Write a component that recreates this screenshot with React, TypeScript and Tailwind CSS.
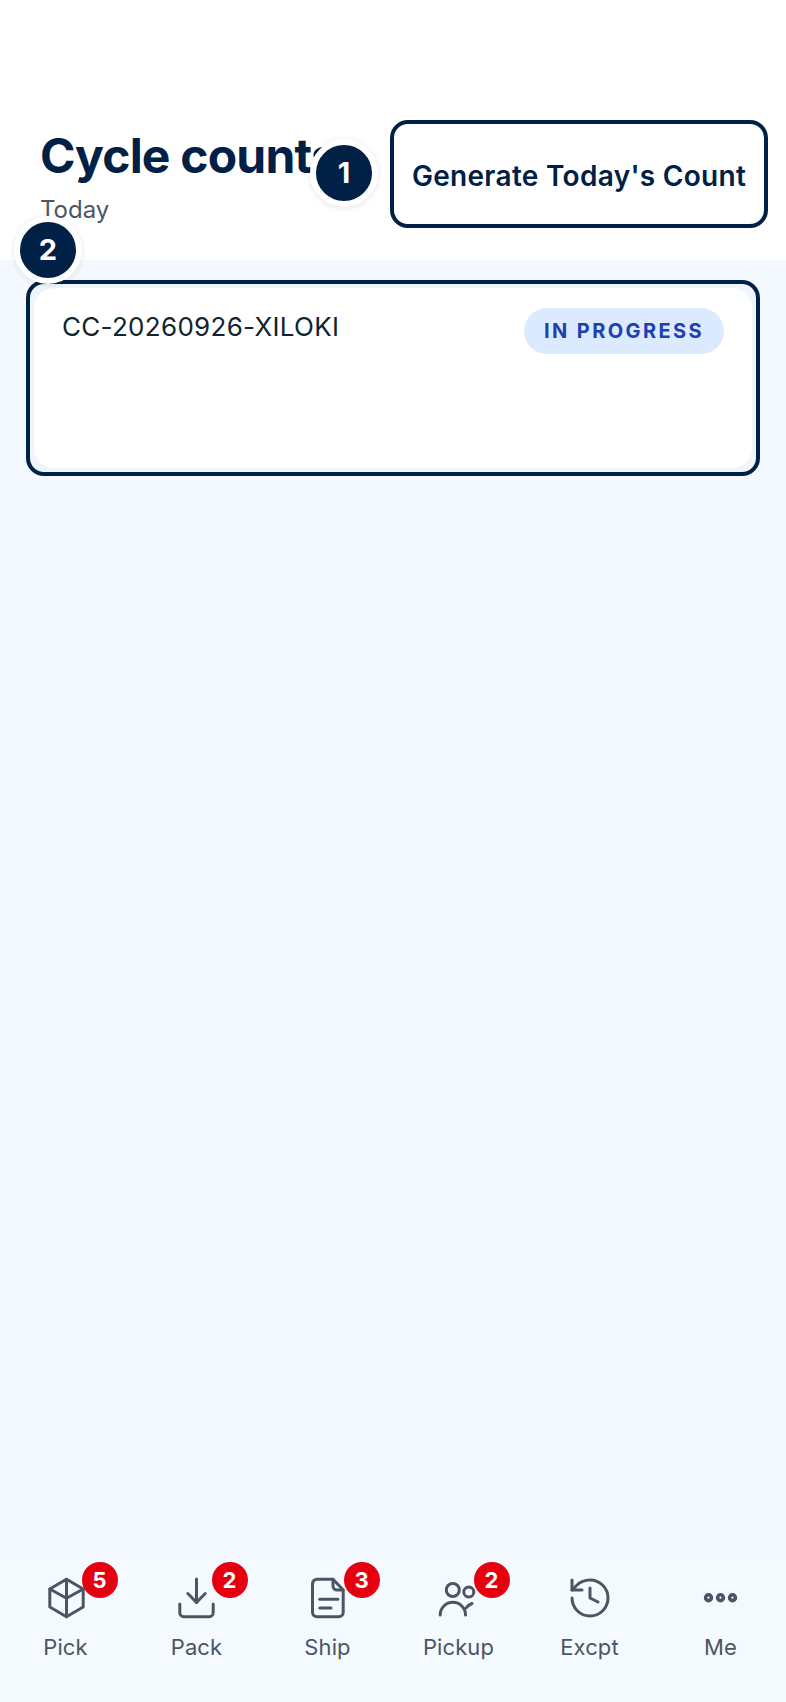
import { History } from "lucide-react";
import type { ReactNode } from "react";

const font = { fontFamily: "Inter, 'Noto Sans', sans-serif" };

function StepMarker({ n, className }: { n: number; className: string }) {
  return (
    <div
      className={`absolute flex h-[68px] w-[68px] items-center justify-center rounded-full border-[6px] border-white bg-[#002045] text-[29px] font-bold text-white shadow-[0_1px_6px_rgba(0,0,0,0.1)] ${className}`}
    >
      {n}
    </div>
  );
}

function Glyph({ children }: { children: ReactNode }) {
  return (
    <svg
      width="48"
      height="48"
      viewBox="0 0 48 48"
      fill="none"
      stroke="currentColor"
      strokeWidth="3"
      strokeLinecap="round"
      strokeLinejoin="round"
    >
      {children}
    </svg>
  );
}

const tabs: { label: string; badge?: number; badgeLeft?: string; icon: ReactNode }[] = [
  {
    label: "Pick",
    badge: 5,
    badgeLeft: "left-10",
    icon: (
      <Glyph>
        <path d="M24.5 5.3 41.2 15v18L24.5 42.7 7.8 33V15z" />
        <path d="M7.8 15l16.7 9.3L41.2 15" />
        <path d="M24.5 5.3v37.4" />
      </Glyph>
    ),
  },
  {
    label: "Pack",
    badge: 2,
    badgeLeft: "left-[39px]",
    icon: (
      <Glyph>
        <path d="M23.5 5v23.5" />
        <path d="M14.8 19.5l8.7 9 8.7-9" />
        <path d="M6.8 30v8.7a4 4 0 0 0 4 4h25.4a4 4 0 0 0 4-4V30" />
      </Glyph>
    ),
  },
  {
    label: "Ship",
    badge: 3,
    badgeLeft: "left-10",
    icon: (
      <Glyph>
        <path d="M13 5.3h16L39.2 16v22.2a4.5 4.5 0 0 1-4.5 4.5H13a4.5 4.5 0 0 1-4.5-4.5V9.8A4.5 4.5 0 0 1 13 5.3z" />
        <path d="M29 5.3V12a4 4 0 0 0 4 4h6.2" />
        <path d="M15.8 25.3h18" />
        <path d="M15.8 34H27" />
      </Glyph>
    ),
  },
  {
    label: "Pickup",
    badge: 2,
    badgeLeft: "left-[39px]",
    icon: (
      <Glyph>
        <circle cx="17.8" cy="16" r="6.5" />
        <circle cx="33.8" cy="18" r="5" />
        <path d="M5.2 41a12.6 12.6 0 0 1 25.3 0" />
        <path d="M31 34q2-3 6-4.5" />
      </Glyph>
    ),
  },
  {
    label: "Excpt",
    icon: <History size={48} strokeWidth={1.5} />,
  },
  {
    label: "Me",
    icon: (
      <Glyph>
        <circle cx="11.5" cy="23.7" r="2.9" strokeWidth="3.6" />
        <circle cx="23.5" cy="23.7" r="2.9" strokeWidth="3.6" />
        <circle cx="35.5" cy="23.7" r="2.9" strokeWidth="3.6" />
      </Glyph>
    ),
  },
];

export default function App() {
  return (
    <div className="relative flex h-[1702px] flex-col overflow-hidden bg-[#f3f9fe]" style={font}>
      <header className="flex h-[260px] shrink-0 items-start justify-between bg-white pl-10 pr-[18px] pt-[120px]">
        <div className="min-w-0">
          <h1 className="mt-2 whitespace-nowrap text-[48px] font-bold leading-[56px] tracking-[-0.8px] text-[#002045]">
            Cycle counts
          </h1>
          <p className="mt-[10px] text-[24px] leading-8 text-[#4b5563]">Today</p>
        </div>
        <button className="h-[108px] w-[378px] shrink-0 rounded-[18px] border-4 border-[#002045] bg-white pt-1 text-[28px] font-semibold tracking-[0.3px] text-[#002045]">
          Generate Today's Count
        </button>
      </header>

      <main className="flex-1 px-[26px] pt-5">
        <div className="rounded-[18px] border-4 border-[#002045] bg-[#f0f5fb] p-1">
          <div className="flex h-[180px] items-start justify-between rounded-[20px] bg-white px-7 pt-5">
            <span className="pt-px text-[26px] leading-9 tracking-[0.3px] text-[#0e2430]">CC-20260926-XILOKI</span>
            <span className="flex h-[46px] w-[200px] items-center justify-center rounded-full bg-[#dbeafe] text-[20px] font-bold tracking-[2.4px] text-[#1e40af]">
              IN PROGRESS
            </span>
          </div>
        </div>
      </main>

      <nav className="grid h-[142px] shrink-0 grid-cols-6 bg-[#f4faff] text-[#4b5563]">
        {tabs.map((tab) => (
          <div key={tab.label} className="flex flex-col items-center pt-[14px]">
            <div className="relative h-12 w-12">
              {tab.icon}
              {tab.badge !== undefined && (
                <span className={`absolute -top-3 flex h-9 w-9 items-center justify-center rounded-full bg-[#e6000f] text-[22px] font-bold text-white ${tab.badgeLeft}`}>
                  {tab.badge}
                </span>
              )}
            </div>
            <span className="mt-[10px] text-[22px] leading-[30px] tracking-[0.1px]">{tab.label}</span>
          </div>
        ))}
      </nav>

      <StepMarker n={1} className="left-[310px] top-[139px]" />
      <StepMarker n={2} className="left-[14px] top-[216px]" />
    </div>
  );
}
